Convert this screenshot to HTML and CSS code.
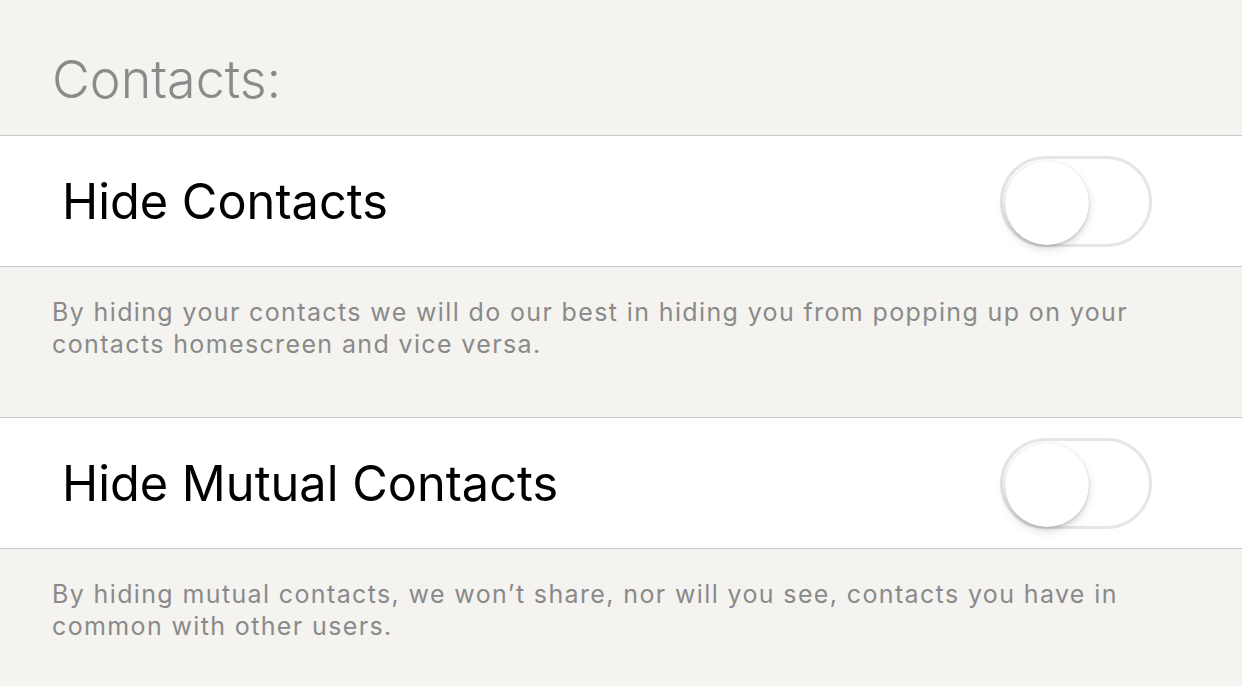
FILE: index.html
```html
<!DOCTYPE html>
<html>
<head>
<meta charset="utf-8">
<link rel="stylesheet" href="styles.css">
</head>
<body>
<div class="page">
  <div class="section-header">Contacts:</div>
  <div class="row">
    <div class="row-title">Hide Contacts</div>
    <div class="switch"><div class="knob"></div></div>
  </div>
  <div class="footer">By hiding your contacts we will do our best in hiding you from popping up on your contacts homescreen and vice versa.</div>
  <div class="row">
    <div class="row-title">Hide Mutual Contacts</div>
    <div class="switch"><div class="knob"></div></div>
  </div>
  <div class="footer">By hiding mutual contacts, we won’t share, nor will you see, contacts you have in common with other users.</div>
</div>
</body>
</html>
```
FILE: styles.css
```css
html, body {
  margin: 0;
  padding: 0;
  background: #f4f3f0;
  font-family: Inter, "Noto Sans", sans-serif;
}
.page {
  width: 1242px;
  height: 686px;
  overflow: hidden;
  display: flex;
  flex-direction: column;
}
.section-header {
  flex-shrink: 0;
  height: 136px;
  box-sizing: border-box;
  padding: 50px 0 0 52px;
  font-size: 52px;
  font-weight: 300;
  color: #8a8a8a;
  line-height: 60px;
  border-bottom: 1px solid #c8c7cc;
}
.row {
  flex-shrink: 0;
  height: 131px;
  box-sizing: border-box;
  background: #fff;
  display: flex;
  align-items: center;
  justify-content: space-between;
  padding: 0 90px 0 62px;
  border-bottom: 1px solid #c8c7cc;
}
.row-title {
  font-size: 48.7px;
  color: #000;
  font-weight: 400;
}
.switch {
  width: 152px;
  height: 91px;
  box-sizing: border-box;
  border: 3px solid #e6e6e6;
  border-radius: 46px;
  padding: 4px 0 1px 2px;
  display: flex;
  align-items: center;
}
.knob {
  width: 84px;
  height: 84px;
  border-radius: 50%;
  background: #fff;
  box-shadow: 0 4px 10px rgba(0,0,0,0.14), 0 2px 3px rgba(0,0,0,0.12), 0 0 1px rgba(0,0,0,0.12);
}
.footer {
  flex-shrink: 0;
  height: 151px;
  box-sizing: border-box;
  padding: 29px 60px 0 52px;
  font-size: 25px;
  line-height: 32px;
  letter-spacing: 1.37px;
  color: #8a8a8a;
  border-bottom: 1px solid #c8c7cc;
}
.footer:last-child {
  border-bottom: none;
}
```
